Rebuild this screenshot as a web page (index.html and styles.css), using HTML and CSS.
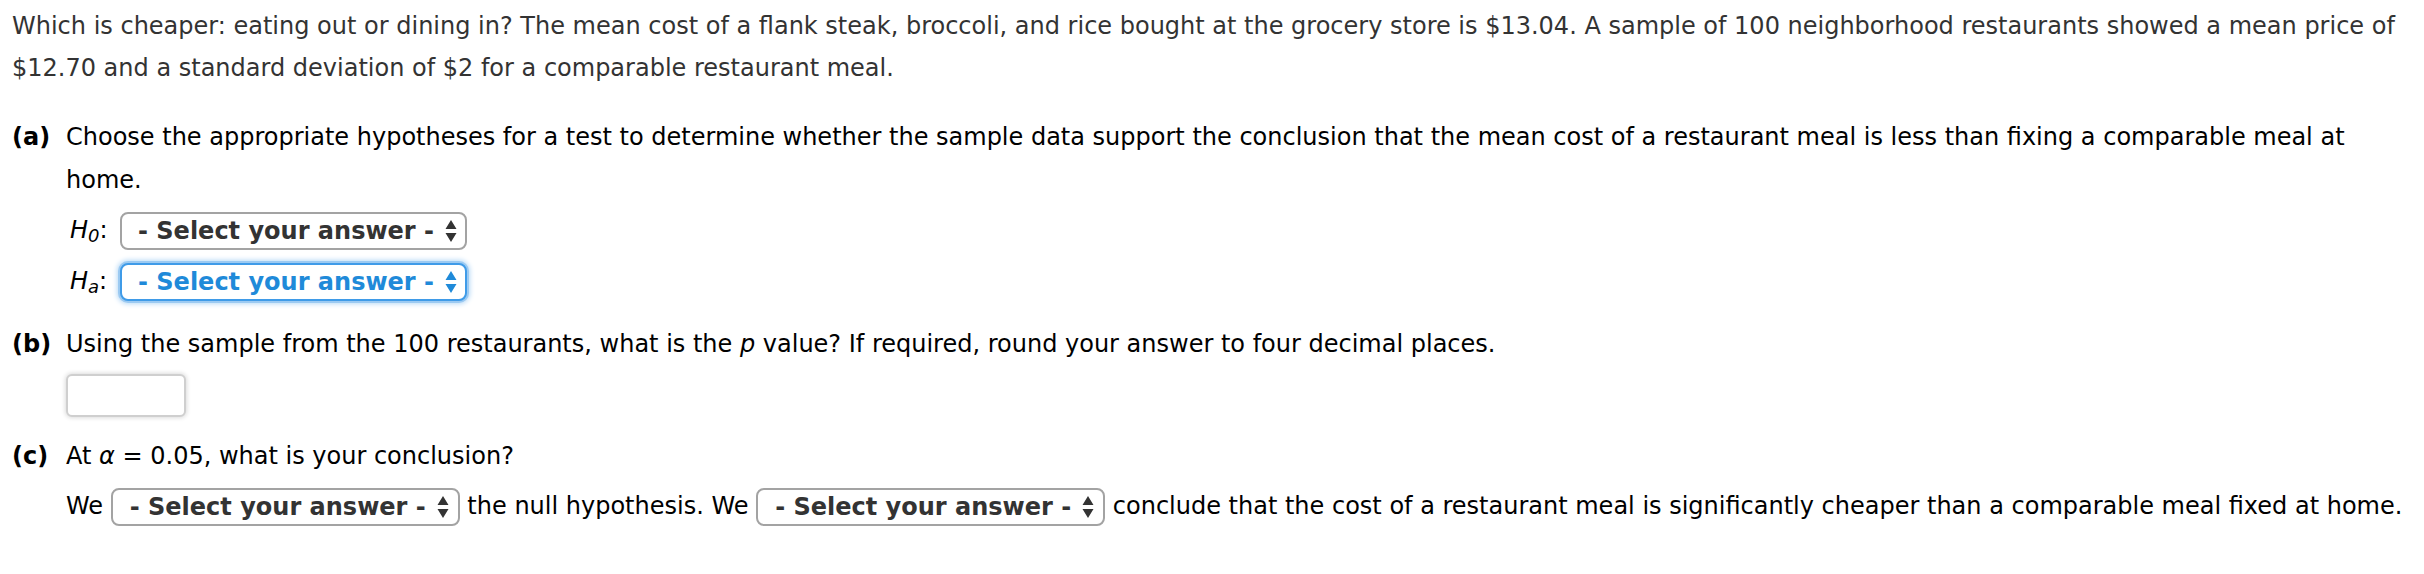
FILE: index.html
```html
<!DOCTYPE html>
<html>
<head>
<meta charset="utf-8">
<link rel="stylesheet" href="styles.css">
</head>
<body>
<div class="question">
  <p class="intro">Which is cheaper: eating out or dining in? The mean cost of a flank steak, broccoli, and rice bought at the grocery store is $13.04. A sample of 100 neighborhood restaurants showed a mean price of $12.70 and a standard deviation of $2 for a comparable restaurant meal.</p>

  <div class="part part-a">
    <b class="part-label">(a)</b>
    <div class="part-body">
      <p class="prompt">Choose the appropriate hypotheses for a test to determine whether the sample data support the conclusion that the mean cost of a restaurant meal is less than fixing a comparable meal at home.</p>
      <div class="hyp-list">
        <div class="hyp-row">
          <span class="hyp-label"><i>H</i><sub><i>0</i></sub>:</span>
          <span class="select"><span class="select-text">- Select your answer -</span><svg class="arrows" width="12" height="22" viewBox="0 0 12 22"><path d="M6 0 L11.5 9 L0.5 9 Z M6 22 L11.5 13 L0.5 13 Z"/></svg></span>
        </div>
        <div class="hyp-row">
          <span class="hyp-label"><i>H</i><sub><i>a</i></sub>:</span>
          <span class="select focused"><span class="select-text">- Select your answer -</span><svg class="arrows" width="12" height="22" viewBox="0 0 12 22"><path d="M6 0 L11.5 9 L0.5 9 Z M6 22 L11.5 13 L0.5 13 Z"/></svg></span>
        </div>
      </div>
    </div>
  </div>

  <div class="part part-b">
    <b class="part-label">(b)</b>
    <div class="part-body">
      <p class="prompt">Using the sample from the 100 restaurants, what is the <i>p</i> value? If required, round your answer to four decimal places.</p>
      <div class="input-row"><span class="text-input"></span></div>
    </div>
  </div>

  <div class="part part-c">
    <b class="part-label">(c)</b>
    <div class="part-body">
      <p class="prompt">At <i>α</i> = 0.05, what is your conclusion?</p>
      <div class="concl-row">We <span class="select"><span class="select-text">- Select your answer -</span><svg class="arrows" width="12" height="22" viewBox="0 0 12 22"><path d="M6 0 L11.5 9 L0.5 9 Z M6 22 L11.5 13 L0.5 13 Z"/></svg></span> the null hypothesis. We <span class="select"><span class="select-text">- Select your answer -</span><svg class="arrows" width="12" height="22" viewBox="0 0 12 22"><path d="M6 0 L11.5 9 L0.5 9 Z M6 22 L11.5 13 L0.5 13 Z"/></svg></span> conclude that the cost of a restaurant meal is significantly cheaper than a comparable meal fixed at home.</div>
    </div>
  </div>
</div>
</body>
</html>
```

FILE: styles.css
```css
html, body {
  margin: 0;
  padding: 0;
  background: #ffffff;
}
body {
  font-family: "DejaVu Sans", Verdana, sans-serif;
  font-size: 24px;
  line-height: 42px;
  color: #000;
}
.question {
  padding: 5px 12px 0 12px;
}
p {
  margin: 0;
}
.intro {
  color: #333;
  margin-bottom: 27px;
}
.part {
  display: grid;
  grid-template-columns: 54px 1fr;
  line-height: 43px;
}
.part-a {
  margin-bottom: 16px;
}
.part-b {
  margin-bottom: 11px;
}
.part-label {
  font-weight: bold;
  color: #000;
}
.prompt {
  color: #000;
}
.hyp-list {
  padding-top: 3px;
}
.hyp-row {
  display: flex;
  align-items: center;
  height: 51px;
}
.hyp-label {
  width: 54px;
  padding-left: 4px;
  box-sizing: border-box;
}
.hyp-label sub {
  font-size: 75%;
  line-height: 0;
  vertical-align: -4px;
}
.select {
  display: inline-flex;
  align-items: center;
  height: 38px;
  box-sizing: border-box;
  border: 2px solid #a3a3a3;
  border-radius: 8px;
  padding: 0 8px 0 16px;
  gap: 11px;
  font-weight: bold;
  color: #333;
  background: #fff;
  vertical-align: middle;
  line-height: 1;
}
.select .arrows {
  fill: #333;
  display: block;
}
.select.focused {
  border-color: #3f9be8;
  color: #1f8ad9;
  box-shadow: 0 0 0 2px #9ccaf2, 0 0 5px 3px #b9daf6;
}
.select.focused .arrows {
  fill: #1f8ad9;
}
.input-row {
  padding-top: 8px;
  height: 50px;
}
.text-input {
  display: block;
  width: 120px;
  height: 43px;
  box-sizing: border-box;
  border: 2px solid #cfcfcf;
  border-radius: 6px;
  box-shadow: 0 0 4px 1px #dcdcdc;
  background: #fff;
}
.concl-row {
  padding-top: 7px;
  white-space: nowrap;
}
.concl-row .select {
  padding-right: 9px;
  padding-left: 17px;
}
```
